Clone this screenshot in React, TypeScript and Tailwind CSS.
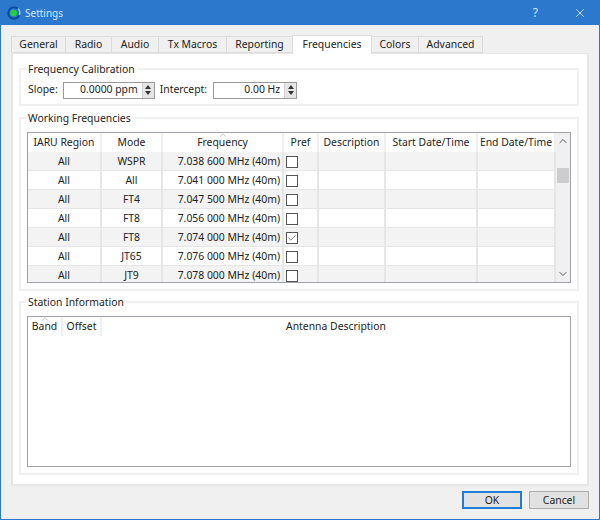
import { ChevronUp, ChevronDown, X, Check } from "lucide-react";

const rows = [
  { mode: "WSPR", freq: "7.038 600 MHz (40m)", pref: false },
  { mode: "All", freq: "7.041 000 MHz (40m)", pref: false },
  { mode: "FT4", freq: "7.047 500 MHz (40m)", pref: false },
  { mode: "FT8", freq: "7.056 000 MHz (40m)", pref: false },
  { mode: "FT8", freq: "7.074 000 MHz (40m)", pref: true },
  { mode: "JT65", freq: "7.076 000 MHz (40m)", pref: false },
  { mode: "JT9", freq: "7.078 000 MHz (40m)", pref: false },
];

const tabs = [
  { name: "General", w: "w-[55px]" },
  { name: "Radio", w: "w-[47px]" },
  { name: "Audio", w: "w-[48px]" },
  { name: "Tx Macros", w: "w-[69px]" },
  { name: "Reporting", w: "w-[67px]" },
  { name: "Frequencies", w: "w-[80px]" },
  { name: "Colors", w: "w-[48px]" },
  { name: "Advanced", w: "w-[65px]" },
];

function Logo() {
  return (
    <svg width="14" height="14" viewBox="0 0 16 16" className="shrink-0">
      <circle cx="8" cy="8" r="6.5" fill="none" stroke="#0b4a9c" strokeWidth="2.2" />
      <path d="M12.5 3a6.5 6.5 0 0 1 1.5 7.5" fill="none" stroke="#8fc4ee" strokeWidth="2" />
      <circle cx="7.5" cy="8" r="3.8" fill="#27d13d" />
    </svg>
  );
}

function Spin({ value, w }: { value: string; w: string }) {
  return (
    <div className={`flex h-[17px] items-center border border-[#9a9a9a] bg-white ${w}`}>
      <span className="flex-1 pr-[4px] text-right">{value}</span>
      <div className="flex h-full w-[12px] flex-col justify-center border-l border-[#d0d0d0] bg-[#e6e6e6]">
        <span className="mx-auto h-0 w-0 border-x-[3px] border-b-[4px] border-x-transparent border-b-[#333]" />
        <span className="mx-auto mt-[2px] h-0 w-0 border-x-[3px] border-t-[4px] border-x-transparent border-t-[#333]" />
      </div>
    </div>
  );
}

function Group({ title, className, children }: { title: string; className: string; children?: React.ReactNode }) {
  return (
    <div className={`border-2 border-[#f0f0f0] ${className}`}>
      <div className="-mt-[8px] ml-[5px] h-[14px] w-fit bg-white px-[2px] leading-[14px] text-[#222]">{title}</div>
      {children}
    </div>
  );
}

function Head({ w, sort, children }: { w: string; sort?: boolean; children: React.ReactNode }) {
  return (
    <div className={`relative flex h-[19px] shrink-0 items-center justify-center whitespace-nowrap border-r-2 border-[#f0f0f0] ${w}`}>
      {sort && <ChevronUp size={10} strokeWidth={1.2} className="absolute left-1/2 top-[-3px] -translate-x-1/2 text-[#888]" />}
      {children}
    </div>
  );
}

function Cell({ w, alt, children }: { w: string; alt: boolean; children?: React.ReactNode }) {
  return (
    <div className={`flex h-[19px] shrink-0 items-center justify-center whitespace-nowrap border-r-2 border-b border-[#e6e6e6] pt-[1px] ${w} ${alt ? "bg-[#f3f3f3]" : "bg-white"}`}>
      {children}
    </div>
  );
}

export default function App() {
  return (
    <div
      className="flex h-[520px] w-[600px] flex-col overflow-hidden border border-t-0 border-[#2b78cd] bg-[#f0f0f0] text-[10.4px] text-[#222]"
      style={{ fontFamily: '"Noto Sans", "Open Sans", sans-serif' }}
    >
      {/* Title bar */}
      <div className="flex h-[25px] shrink-0 items-center bg-[#2b78cd] pl-[6px] text-[#d4e6f8]">
        <Logo />
        <span className="ml-[4px] pt-[1px] text-[10px]">Settings</span>
        <span className="ml-auto mr-[35px] text-[12px]">?</span>
        <X size={14} strokeWidth={1.2} className="mr-[12px] text-white" />
      </div>

      {/* Tabs */}
      <div className="mt-[10px] flex h-[18px] shrink-0 items-end pl-[10px]">
        {tabs.map((t) =>
          t.name === "Frequencies" ? (
            <div key={t.name} className={`z-10 -mb-px -ml-px flex h-[19px] items-center justify-center border border-b-0 border-[#dcdcdc] bg-white pb-[1px] ${t.w}`}>{t.name}</div>
          ) : (
            <div key={t.name} className={`-ml-px flex h-[17px] items-center justify-center border border-[#dcdcdc] bg-[#f0f0f0] first:ml-0 ${t.w}`}>{t.name}</div>
          ),
        )}
      </div>

      {/* Panel */}
      <div className="ml-[10px] mr-[10px] h-[433px] shrink-0 border-2 border-t border-[#e6e6e6] bg-white pl-[6px] pr-[8px] pt-[14px]">
        <Group title="Frequency Calibration" className="h-[38px]">
          <div className="mt-[3px] flex h-[22px] items-center pl-[7px]">
            <span>Slope:</span>
            <span className="ml-[5px]"><Spin value="0.0000 ppm" w="w-[92px]" /></span>
            <span className="ml-[5px]">Intercept:</span>
            <span className="ml-[6px]"><Spin value="0.00 Hz" w="w-[84px]" /></span>
          </div>
        </Group>

        <Group title="Working Frequencies" className="mt-[11px] h-[174px]">
          <div className="mx-[6px] mt-[7px] flex h-[151px] overflow-hidden border border-[#a0a0a8]">
            <div className="w-[528px] shrink-0">
              <div className="flex">
                <Head w="w-[74px]">IARU Region</Head>
                <Head w="w-[61px]">Mode</Head>
                <Head w="w-[121px]" sort>Frequency</Head>
                <Head w="w-[35px]">Pref</Head>
                <Head w="w-[67px]">Description</Head>
                <Head w="w-[92px]">Start Date/Time</Head>
                <Head w="w-[78px]">End Date/Time</Head>
              </div>
              {rows.map((r, i) => {
                const alt = i % 2 === 0;
                return (
                  <div key={r.freq} className="flex">
                    <Cell w="w-[74px]" alt={alt}>All</Cell>
                    <Cell w="w-[61px]" alt={alt}>{r.mode}</Cell>
                    <Cell w="w-[121px]" alt={alt}>
                      <span className="w-full pr-[2px] text-right">{r.freq}</span>
                    </Cell>
                    <Cell w="w-[35px]" alt={alt}>
                      <span className="mr-[17px] flex h-[12px] w-[12px] items-center justify-center border border-[#555] bg-white">
                        {r.pref && <Check size={10} strokeWidth={1.6} className="text-[#333]" />}
                      </span>
                    </Cell>
                    <Cell w="w-[67px]" alt={alt} />
                    <Cell w="w-[92px]" alt={alt} />
                    <Cell w="w-[78px]" alt={alt} />
                  </div>
                );
              })}
            </div>
            <div className="flex flex-1 flex-col items-center bg-[#f0f0f0]">
              <ChevronUp size={12} strokeWidth={2} className="mt-[2px] text-[#555]" />
              <div className="mt-[21px] h-[15px] w-[12px] bg-[#cdcdcd]" />
              <ChevronDown size={12} strokeWidth={2} className="mb-[2px] mt-auto text-[#555]" />
            </div>
          </div>
        </Group>

        <Group title="Station Information" className="mt-[10px] h-[174px]">
          <div className="mx-[6px] mt-[7px] h-[151px] border border-[#a0a0a8] bg-white">
            <div className="flex">
              <Head w="w-[35px]" sort>Band</Head>
              <Head w="w-[39px]">Offset</Head>
              <div className="flex h-[19px] flex-1 items-center justify-center">Antenna Description</div>
            </div>
          </div>
        </Group>
      </div>

      {/* Buttons */}
      <div className="flex flex-1 justify-end gap-[7px] pr-[10px] pt-[5px]">
        <button className="h-[18px] w-[60px] border-2 border-[#1c7ed6] bg-[#e1e1e1] leading-none">OK</button>
        <button className="h-[18px] w-[60px] border border-[#adadad] bg-[#e1e1e1] leading-none">Cancel</button>
      </div>
    </div>
  );
}
